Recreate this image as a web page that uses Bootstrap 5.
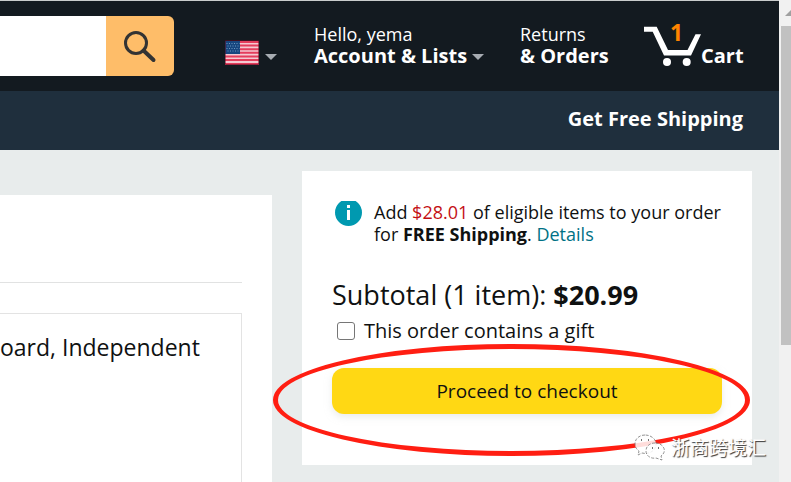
<!DOCTYPE html>
<html lang="en">
<head>
<meta charset="utf-8">
<meta name="viewport" content="width=device-width, initial-scale=1">
<title>Shopping Cart</title>
<link href="https://cdn.jsdelivr.net/npm/bootstrap@5.3.0/dist/css/bootstrap.min.css" rel="stylesheet">
<style>
body { font-family: "Open Sans", "Noto Sans", "Noto Sans CJK SC", sans-serif; color: #0f1111; background: #e8ecec; }
.page-shell { min-height: 100vh; overflow: hidden; }
.topbar { background: #131a20; border-top: 1px solid #c9cccc; padding: 15px 36px 15px 0; gap: 36px; }
.search-group { height: 60px; margin-right: 15px; }
.search-group input { background: #fff; min-width: 0; width: 100%; }
.search-group button { width: 68px; flex: none; background: #febd69; border-radius: 0 6px 6px 0; }
.nav-item-link { color: #fff; text-decoration: none; font-size: 20px; font-weight: 700; line-height: 22px; white-space: nowrap; flex: none; padding-top: 7px; }
.nav-item-link .line-one { display: block; font-size: 18px; font-weight: 400; }
.caret { display: inline-block; border: 6px solid transparent; border-top-color: #a7acb2; border-bottom: 0; vertical-align: 3px; }
.flag-link { width: 53px; padding-top: 12px; gap: 6px; }
.flag-link .caret { margin-bottom: 6px; }
.account-link { width: 170px; }
.orders-link { width: 88px; }
.cart-link { width: 99px; }
.cart-link svg { overflow: visible; }
.subbar { background: #1f2f3d; height: 59px; padding: 0 36px 4px 0; }
.subbar .nav-item-link { padding: 0; }
.main-area { padding: 21px 27px 0 0; gap: 30px; }
.items-panel { background: #fff; margin-top: 24px; padding: 87px 30px 0 0; min-width: 0; }
.items-panel hr { margin: 0 0 30px; border-color: #888c8c; }
.item-box { border: 1px solid #e3e3e3; border-width: 1px 1px 0 0; min-height: 169px; padding-top: 17px; font-size: 23px; line-height: 32px; white-space: nowrap; }
.summary-card { width: 450px; height: 294px; flex: none; background: #fff; padding: 30px; }
.notice { gap: 12px; padding-left: 3px; font-size: 18px; line-height: 22px; margin-bottom: 33px; white-space: nowrap; }
.price-red { color: #c40f14; }
.details-link { color: #007185; text-decoration: none; }
.subtotal { font-size: 27px; line-height: 34px; margin: 0 0 4px; white-space: nowrap; }
.gift { font-size: 20px; line-height: 30px; gap: 9px; padding-left: 5px; margin-bottom: 22px; }
.gift .form-check-input { width: 18px; height: 18px; margin: 0; border: 1px solid #767676; border-radius: 3px; }
.checkout { height: 46px; border-radius: 12px; background: #ffd814; color: #0f1111; font-size: 19px; line-height: 44px; box-shadow: 0 3px 7px rgba(213,217,217,.5); }
.highlight-ring { left: -29px; right: 2px; top: 173px; height: 112px; border: 5px solid #ff1e12; border-radius: 50%; pointer-events: none; }
.watermark { right: -14px; bottom: 4px; gap: 5px; font: 19px/28px "Noto Sans CJK SC", sans-serif; color: #fff; text-shadow: 1px 1px 1px #333; white-space: nowrap; }
.scroll-track { width: 12px; flex: none; background: #f1f1f1; padding: 10px 0 0 2px; }
.scroll-track svg { display: block; margin-bottom: 10px; }
.scroll-thumb { background: #c1c1c1; height: 319px; }
</style>
</head>
<body>
<div class="page-shell d-flex">
  <div class="flex-grow-1 overflow-hidden">
    <header class="topbar d-flex align-items-start">
      <form class="search-group d-flex flex-grow-1">
        <input type="text" class="border-0" aria-label="Search">
        <button type="button" class="border-0 p-0" aria-label="Go">
          <svg width="36" height="36" viewBox="0 0 36 36" fill="none" stroke="#333" aria-hidden="true"><circle cx="14" cy="15" r="10.500" stroke-width="3"/><path d="M21.500 22.500 31.500 32" stroke-width="4" stroke-linecap="round"/></svg>
        </button>
      </form>
      <a href="#" class="nav-item-link flag-link d-flex align-items-end" aria-label="Choose country">
        <svg width="34" height="38" viewBox="0 0 34 38" aria-hidden="true">
          <path fill="#f5c9d1" d="M0 13h34v24H0z"/>
          <path d="M0 14h34M0 17.600h34M0 21.200h34M0 24.800h34M0 28.400h34M0 32h34M0 36h34" stroke="#e43d5c" stroke-width="2"/>
          <path fill="#17467f" d="M0 13h15v13H0z"/>
          <path d="M1.500 15.500h13M2.500 18h12M1.500 20.500h13M2.500 23h12" stroke="#6e98c0" stroke-dasharray="1 1.500"/>
          <path d="M.5 12.500h33v24H.5z" fill="none" stroke="#600d24" stroke-opacity=".55"/>
        </svg>
        <span class="caret"></span>
      </a>
      <a href="#" class="nav-item-link account-link"><span class="line-one">Hello, yema</span>Account &amp; Lists <span class="caret"></span></a>
      <a href="#" class="nav-item-link orders-link"><span class="line-one">Returns</span>&amp; Orders</a>
      <a href="#" class="nav-item-link cart-link d-flex align-items-end">
        <svg width="57" height="44" viewBox="0 0 57 44" aria-hidden="true"><path d="M0 3.700h12.700L24 27h19.500l8-15.700H57L47 32.600H20L8.700 8.700H0z" fill="#fff"/><circle cx="23" cy="39" r="4" fill="#fff"/><circle cx="42.700" cy="39" r="4" fill="#fff"/><text x="26" y="18" font-size="23" font-weight="700" fill="#ff8400">1</text></svg>
        <span>Cart</span>
      </a>
    </header>
    <div class="subbar d-flex align-items-center justify-content-end"><a href="#" class="nav-item-link">Get Free Shipping</a></div>
    <main class="main-area d-flex">
      <section class="items-panel flex-grow-1">
        <hr>
        <div class="item-box">oard, Independent</div>
      </section>
      <aside class="summary-card position-relative">
        <div class="notice d-flex">
          <svg class="flex-shrink-0" width="27" height="26" viewBox="0 0 27 26" aria-hidden="true"><circle cx="13.500" cy="11.500" r="13.500" fill="#0099b0"/><path d="M12 4h3v3h-3zM12 9h3v10h-3z" fill="#fff"/></svg>
          <div>Add <span class="price-red">$28.01</span> of eligible items to your order<br>for <b>FREE Shipping</b>. <a href="#" class="details-link">Details</a></div>
        </div>
        <p class="subtotal">Subtotal (1 item): <b>$20.99</b></p>
        <div class="gift d-flex align-items-center">
          <input class="form-check-input" type="checkbox" id="gift"><label for="gift">This order contains a gift</label>
        </div>
        <button type="button" class="checkout btn w-100 border-0 p-0">Proceed to checkout</button>
        <div class="highlight-ring position-absolute"></div>
        <div class="watermark position-absolute d-flex align-items-center" lang="zh">
          <svg width="32" height="28" viewBox="0 0 32 28" aria-hidden="true"><g fill="#fff" fill-opacity=".85" stroke="#777" stroke-width=".8" stroke-dasharray="3 1.500"><path d="M11 2C5 2 1 6 1 11c0 3 1.500 5 4 7l-1 4 4-2c8 2 14-3 14-9 0-5-5-9-11-9z"/><path d="M21 10c-5 0-9 3-9 8s5 8 10 7l6 2-1-4c7-5 2-13-6-13z"/></g><path d="M7 7h1M14 7h1M18 15h1M24 15h1" stroke="#444" stroke-width="1.500"/></svg>
          <span>浙商跨境汇</span>
        </div>
      </aside>
    </main>
  </div>
  <div class="scroll-track" aria-hidden="true"><svg width="10" height="6" viewBox="0 0 10 6"><path d="M4 6 10 0v6z" fill="#a0a0a0"/></svg><div class="scroll-thumb"></div></div>
</div>
<script src="https://cdn.jsdelivr.net/npm/bootstrap@5.3.0/dist/js/bootstrap.bundle.min.js"></script>
</body>
</html>
